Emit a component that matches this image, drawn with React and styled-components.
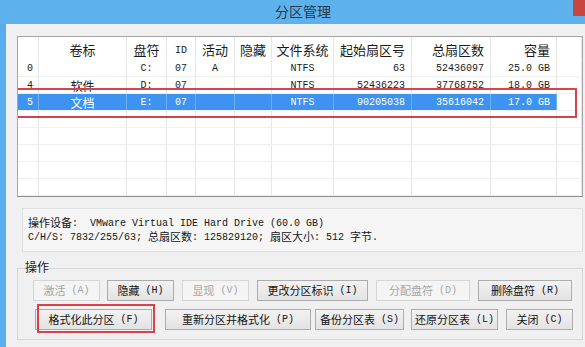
import styled, {createGlobalStyle} from "styled-components";

const GlobalStyle = createGlobalStyle`
    html, body {
        margin: 0;
        padding: 0;
        overflow: hidden;
        background: #58adea;
    }
    * {
        box-sizing: border-box;
    }
`;

const Frame = styled.div`
    display: flex;
    flex-direction: column;
    width: 585px;
    height: 347px;
    background: #58adea;
    font-family: "Liberation Mono", "Noto Sans CJK SC", monospace;
    font-size: 10px;
    color: #111;
`;
const TitleBar = styled.div`
    display: flex;
    align-items: flex-start;
    height: 24px;
    flex-shrink: 0;
    background: #5db2ee;
`;
const Title = styled.div`
    --han: 14px;
    margin-left: 275px;
    padding-top: 4px;
    line-height: 20px;
    color: #24384c;
`;
const CloseBtn = styled.div`
    margin-left: auto;
    width: 12px;
    height: 16px;
    background: #c8463f;
`;
const Client = styled.div`
    flex: 1;
    display: flex;
    flex-direction: column;
    margin-left: 6px;
    padding: 12px 2px 0 11px;
    background: #f0f0f0;
`;

const Table = styled.div`
    position: relative;
    height: 161px;
    overflow: hidden;
    background: #fff;
    border: 1px solid #a5a5a5;
    border-bottom-color: #8e8e8e;
`;
const Row = styled.div`
    display: grid;
    grid-template-columns: 21px 88px 40px 29px 39px 37px 62px 78px 79px 66px 1fr;
    height: ${({$head}) => $head ? "23px" : "17px"};
    border-bottom: 1px solid ${({$head}) => $head ? "transparent" : "#efefef"};
    --han: ${({$head}) => $head ? "13px" : "12px"};
`;
const Cell = styled.div`
    display: flex;
    align-items: center;
    justify-content: ${({$align}) => $align === "right" ? "flex-end" : $align === "left" ? "flex-start" : "center"};
    padding: ${({$head}) => $head ? "5px" : "2px"} ${({$align}) => $align === "right" ? "6px" : "0"} 0 ${({$align}) => $align === "left" ? "9px" : "0"};
    line-height: 12px;
    white-space: nowrap;
    border-right: 1px solid ${({$sel}) => $sel ? "#6eb0f3" : "#e6e6e6"};
    background: ${({$sel}) => $sel ? "#3d93ef" : "transparent"};
    color: ${({$sel}) => $sel ? "#fff" : "#1a1a1a"};
`;
const Mark = styled.div`
    position: absolute;
    left: -2px;
    top: 51px;
    width: 561px;
    height: 30px;
    border: 2px solid #d8424b;
    pointer-events: none;
`;

const InfoBox = styled.div`
    margin: 11px 0 0 5px;
    height: 44px;
    padding: 8px 5px;
    background: #f5f5f5;
    border: 1px solid #e0e0e0;
    --han: 11px;
`;
const InfoLine = styled.div`
    height: 14px;
    line-height: 14px;
    white-space: pre;
    color: #161616;
`;

const Group = styled.fieldset`
    margin: 7px 0 0 0;
    padding: 3px 0 9px 7px;
    border: 1px solid #d8d8d8;
    min-width: 0;
`;
const Legend = styled.legend`
    --han: 12px;
    padding: 2px 0 0;
    line-height: 16px;
    color: #1a1a1a;
`;
const BtnArea = styled.div`
    display: flex;
    flex-direction: column;
    gap: 8px;
    padding-left: 8px;
`;
const BtnRow = styled.div`
    display: flex;
`;
const Button = styled.div`
    --han: 11px;
    position: relative;
    display: flex;
    align-items: center;
    justify-content: center;
    flex-shrink: 0;
    width: ${({$w}) => $w}px;
    height: 21px;
    margin-left: ${({$ml}) => $ml || 0}px;
    padding-top: 1px;
    line-height: 12px;
    white-space: pre;
    border: 1px solid ${({$off}) => $off ? "#d6d6d6" : "#acacac"};
    background: ${({$off}) => $off ? "#f4f4f4" : "linear-gradient(#f2f2f2, #e3e3e3)"};
    color: ${({$off}) => $off ? "#a6a6a6" : "#141414"};

    ${({$mark}) => $mark && `
        &::after{
            content: "";
            position: absolute;
            top: -6px;
            right: -4px;
            bottom: -4px;
            left: 1px;
            border: 2px solid #d8424b;
        }
    `}
`;
// CJK runs: bigger than the Latin mono, kept on the same baseline without
// stretching the line box
const Han = styled.span`
    display: inline-block;
    vertical-align: -1px;
    line-height: 0.5;
    font-family: "Noto Sans CJK SC", sans-serif;
    font-size: var(--han, 12px);
`;

const cjk = /([\u2E80-\u9FFF\u3000-\u303F\uFF00-\uFFEF]+)/;

function Mixed({children}) {
    const parts = String(children).split(cjk);
    return parts.map((p, i) => (i % 2 ? <Han key={i}>{p}</Han> : p));
}

const columns = [
    {title: "", align: "left"},
    {title: "卷标", align: "center"},
    {title: "盘符", align: "center"},
    {title: "ID", align: "center"},
    {title: "活动", align: "center"},
    {title: "隐藏", align: "center"},
    {title: "文件系统", align: "center"},
    {title: "起始扇区号", align: "right"},
    {title: "总扇区数", align: "right"},
    {title: "容量", align: "right"},
    {title: "", align: "center"},
];

const partitions = [
    ["0", "", "C:", "07", "A", "", "NTFS", "63", "52436097", "25.0 GB"],
    ["4", "软件", "D:", "07", "", "", "NTFS", "52436223", "37768752", "18.0 GB"],
    ["5", "文档", "E:", "07", "", "", "NTFS", "90205038", "35616042", "17.0 GB"],
];

const buttonRows = [
    [
        {label: "激活 (A)", w: 67, off: true},
        {label: "隐藏 (H)", w: 67, ml: 7},
        {label: "显现 (V)", w: 67, ml: 8, off: true},
        {label: "更改分区标识 (I)", w: 111, ml: 8},
        {label: "分配盘符 (D)", w: 94, ml: 8, off: true},
        {label: "删除盘符 (R)", w: 94, ml: 8},
    ],
    [
        {label: "格式化此分区 (F)", w: 117, ml: 2, mark: true},
        {label: "重新分区并格式化 (P)", w: 146, ml: 13},
        {label: "备份分区表 (S)", w: 89, ml: 4},
        {label: "还原分区表 (L)", w: 87, ml: 7},
        {label: "关闭 (C)", w: 67, ml: 8},
    ],
];

function App() {
    const empty = Array.from({length: 5}, () => columns.map(() => ""));

    return (
        <>
            <GlobalStyle/>
            <Frame>
                <TitleBar>
                    <Title><Mixed>分区管理</Mixed></Title>
                    <CloseBtn/>
                </TitleBar>
                <Client>
                    <Table>
                        <Row $head>
                            {columns.map((c, i) => (
                                <Cell key={i} $head $align={c.align}><Mixed>{c.title}</Mixed></Cell>
                            ))}
                        </Row>
                        {partitions.map((row, r) => (
                            <Row key={r}>
                                {columns.map((c, i) => (
                                    <Cell key={i} $align={c.align} $sel={r === 2 && i < 10}>
                                        <Mixed>{row[i] || ""}</Mixed>
                                    </Cell>
                                ))}
                            </Row>
                        ))}
                        {empty.map((row, r) => (
                            <Row key={`e${r}`}>
                                {row.map((v, i) => <Cell key={i}/>)}
                            </Row>
                        ))}
                        <Mark/>
                    </Table>

                    <InfoBox>
                        <InfoLine><Mixed>{"操作设备:  VMware Virtual IDE Hard Drive (60.0 GB)"}</Mixed></InfoLine>
                        <InfoLine><Mixed>{"C/H/S: 7832/255/63; 总扇区数: 125829120; 扇区大小: 512 字节."}</Mixed></InfoLine>
                    </InfoBox>

                    <Group>
                        <Legend><Mixed>操作</Mixed></Legend>
                        <BtnArea>
                            {buttonRows.map((row, r) => (
                                <BtnRow key={r}>
                                    {row.map((b, i) => (
                                        <Button key={i} $w={b.w} $ml={b.ml} $off={b.off} $mark={b.mark}>
                                            <Mixed>{b.label}</Mixed>
                                        </Button>
                                    ))}
                                </BtnRow>
                            ))}
                        </BtnArea>
                    </Group>
                </Client>
            </Frame>
        </>
    );
}

export default App;
